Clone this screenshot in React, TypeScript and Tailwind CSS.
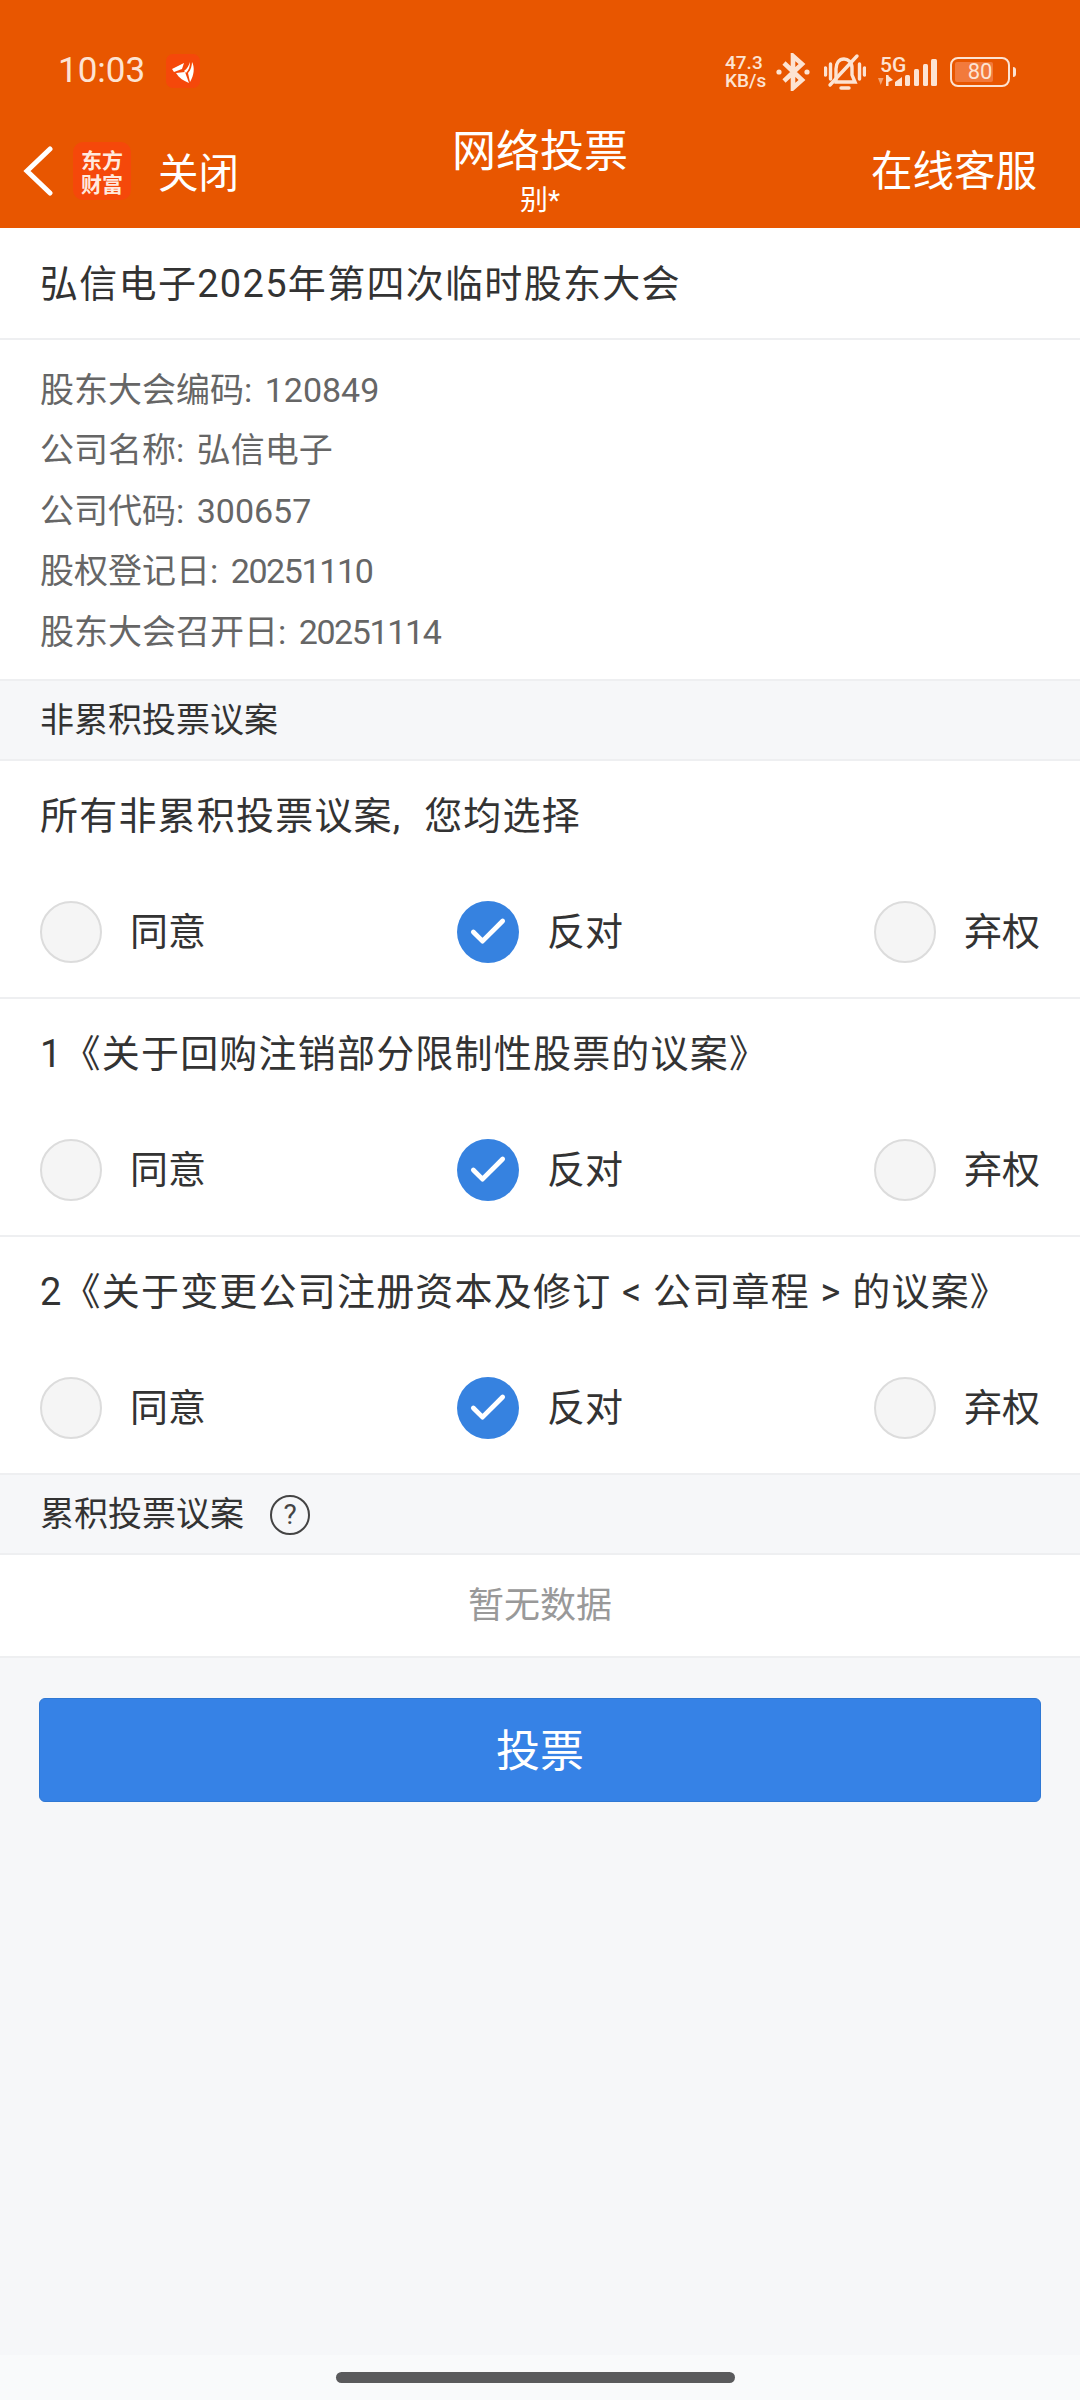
import type { ReactNode } from "react";
import { Check } from "lucide-react";

const FONT = "font-['Roboto','Noto_Sans_CJK_SC',sans-serif]";

function StatusBar() {
  return (
    <div className="flex h-[120px] items-start justify-between pl-[58px] pr-[64px] pt-[53px]">
      <div className="flex items-center gap-[21px]">
        <span className="text-[35px] leading-[36px] text-[#fde3d2]">10:03</span>
        <div className="flex h-[34px] w-[34px] items-center justify-center rounded-[7px] bg-[#f5480a]">
          <svg viewBox="0 0 34 34" className="h-[34px] w-[34px]" fill="#fff">
            <path d="M6 15 L18 9 L16 15 L8 18Z" />
            <path d="M18 17 C21 15 23 11 24 8 C24 12 23 16 20 19 Z" />
            <path d="M10 19 L19 18 L23 29 C18 27 13 24 10 19Z" />
            <path d="M22 19 C25 16 26 11 26 8 C29 13 28 22 24 28 Z" />
          </svg>
        </div>
      </div>
      <div className="flex items-center text-[#fde3d2]">
        <div className="flex w-[43px] flex-col items-start text-[19px] leading-[18px] font-medium">
          <span>47.3</span>
          <span>KB/s</span>
        </div>
        <svg viewBox="0 0 34 38" className="ml-[8px] h-[38px] w-[34px]" fill="none" stroke="currentColor" strokeWidth="4.6">
          <path d="M8 10 L26 27 L17 35 L17 3 L26 11 L8 28" />
          <circle cx="3" cy="19" r="2.6" fill="currentColor" stroke="none" />
          <circle cx="31" cy="19" r="2.6" fill="currentColor" stroke="none" />
        </svg>
        <svg viewBox="0 0 42 38" className="ml-[14px] h-[38px] w-[42px]" fill="none" stroke="currentColor" strokeWidth="3.4" strokeLinecap="round">
          <path d="M1.5 15 V22 M6.5 11 V26 M35.5 11 V26 M40.5 15 V22" />
          <path d="M12 29 H31 L28 22 V15 C28 9 24 6 20 6 C15 6 12 10 12 16 V22 Z" />
          <path d="M6 32 L33 3" />
          <path d="M17 35 H25" />
        </svg>
        <div className="relative ml-[12px] h-[30px] w-[60px]">
          <svg viewBox="0 0 60 30" className="h-[30px] w-[60px]" fill="currentColor">
            <path d="M0 21 H5.5 L2.7 28Z" opacity="0.55" />
            <path d="M8 18 H10.5 V29 H8Z M10.5 19 L15 23 L10.5 25Z" />
            <path d="M17 29 V25 L24 20 V29Z" />
            <rect x="27" y="18" width="5" height="11" rx="1.5" />
            <rect x="36" y="12" width="5" height="17" rx="1.5" />
            <rect x="45" y="7" width="5" height="22" rx="1.5" />
            <rect x="53" y="2" width="6" height="27" rx="1.5" />
          </svg>
          <span className="absolute left-[2px] top-0 text-[21px] leading-[16px] font-medium">5G</span>
        </div>
        <div className="relative ml-[12px] flex h-[30px] w-[60px] rounded-[8px] border-[2.5px] border-[#fde3d2] p-[3px]">
          <div className="h-full w-[75%] rounded-[2px] bg-[#f27a3c]" />
          <span className="absolute inset-0 text-center text-[22px] leading-[25px]">80</span>
        </div>
        <div className="ml-[3px] h-[10px] w-[3px] rounded-r-full bg-[#fde3d2]" />
      </div>
    </div>
  );
}

function NavBar() {
  return (
    <div className="relative flex h-[108px] items-start justify-between pl-[23px] pr-[43px] pt-[19px] text-white">
      <div className="flex items-center">
        <svg viewBox="0 0 30 50" className="h-[50px] w-[30px]" fill="none" stroke="white" strokeWidth="5" strokeLinecap="round">
          <path d="M27 3 L4 25 L27 47" />
        </svg>
        <div className="ml-[20px] flex h-[58px] w-[58px] items-center justify-center rounded-[10px] bg-[#f5480a] text-center font-['Noto_Sans_CJK_SC',serif] text-[21px] leading-[24px] font-bold text-[#ffe9de]">
          东方
          <br />
          财富
        </div>
        <span className="ml-[27px] mt-[7px] text-[40.5px] leading-[56px]">关闭</span>
      </div>
      <div className="absolute left-0 right-0 top-[4px] flex flex-col items-center">
        <span className="text-[44px] leading-[56px]">网络投票</span>
        <span className="mt-[5px] text-[28px] leading-[32px]">别*</span>
      </div>
      <span className="mt-[5px] text-[41.5px] leading-[56px]">在线客服</span>
    </div>
  );
}

function Radio({ label, checked }: { label: string; checked?: boolean }) {
  return (
    <div className="flex items-center gap-[28px]">
      {checked ? (
        <div className="flex h-[62px] w-[62px] items-center justify-center rounded-full bg-[#3682e0]">
          <Check size={44} color="white" strokeWidth={2.6} />
        </div>
      ) : (
        <div className="h-[62px] w-[62px] rounded-full border-2 border-[#dcdcdc] bg-[#f5f5f5]" />
      )}
      <span className="text-[38px] leading-[50px] text-[#333]">{label}</span>
    </div>
  );
}

function Proposal({ title }: { title: ReactNode }) {
  return (
    <div className="h-[238px] border-b-2 border-[#eeeff1] bg-white px-[40px] pt-[28px]">
      <div className="text-[38px] leading-[54px] tracking-[1.2px] whitespace-nowrap text-[#333]">{title}</div>
      <div className="mt-[58px] flex items-center justify-between">
        <Radio label="同意" />
        <Radio label="反对" checked />
        <Radio label="弃权" />
      </div>
    </div>
  );
}

function SectionHead({ children }: { children: ReactNode }) {
  return (
    <div className="flex h-[80px] items-center gap-[26px] border-b-2 border-[#eeeff1] bg-[#f6f7f9] px-[40px] pt-[1px] text-[34px] text-[#333]">
      {children}
    </div>
  );
}

export default function App() {
  return (
    <div className={`flex h-[2400px] w-[1080px] flex-col bg-[#f6f7f9] ${FONT}`}>
      <div className="h-[228px] bg-[#e85600]">
        <StatusBar />
        <NavBar />
      </div>

      <div className="flex h-[112px] items-center border-b-2 border-[#eeeff1] bg-white px-[40px] pt-[3px] text-[38px] tracking-[1.3px] text-[#333]">
        弘信电子2025年第四次临时股东大会
      </div>

      <div className="h-[341px] border-b-2 border-[#eeeff1] bg-white px-[40px] pt-[20px] text-[34px] leading-[60.4px] [word-spacing:4px] text-[#666]">
        <div>股东大会编码: 120849</div>
        <div>公司名称: 弘信电子</div>
        <div>公司代码: 300657</div>
        <div>
          股权登记日: <span className="tracking-[-1.4px]">20251110</span>
        </div>
        <div>
          股东大会召开日: <span className="tracking-[-1.4px]">20251114</span>
        </div>
      </div>

      <SectionHead>非累积投票议案</SectionHead>
      <Proposal
        title={
          <>
            所有非累积投票议案<span className="mr-[12px]">, </span>您均选择
          </>
        }
      />
      <Proposal title="1《关于回购注销部分限制性股票的议案》" />
      <Proposal title="2《关于变更公司注册资本及修订 < 公司章程 > 的议案》" />

      <SectionHead>
        累积投票议案
        <div className="flex h-[40px] w-[40px] items-center justify-center rounded-full border-2 border-[#444] text-[28px] leading-none text-[#444]">
          ?
        </div>
      </SectionHead>

      <div className="flex h-[103px] items-center justify-center border-b-2 border-[#eeeff1] bg-white pt-[1px] text-[36px] text-[#999]">
        暂无数据
      </div>

      <div className="mx-[39px] mt-[40px] flex h-[104px] items-center justify-center rounded-[6px] border border-[#2f78d4] bg-[#3682e6] pt-[3px] text-[44px] text-white">
        投票
      </div>

      <div className="mt-auto flex h-[45px] items-start justify-center bg-[#f9fafb] pr-[10px] pt-[17px]">
        <div className="h-[11px] w-[399px] rounded-full bg-[#5a5a5c]" />
      </div>
    </div>
  );
}
